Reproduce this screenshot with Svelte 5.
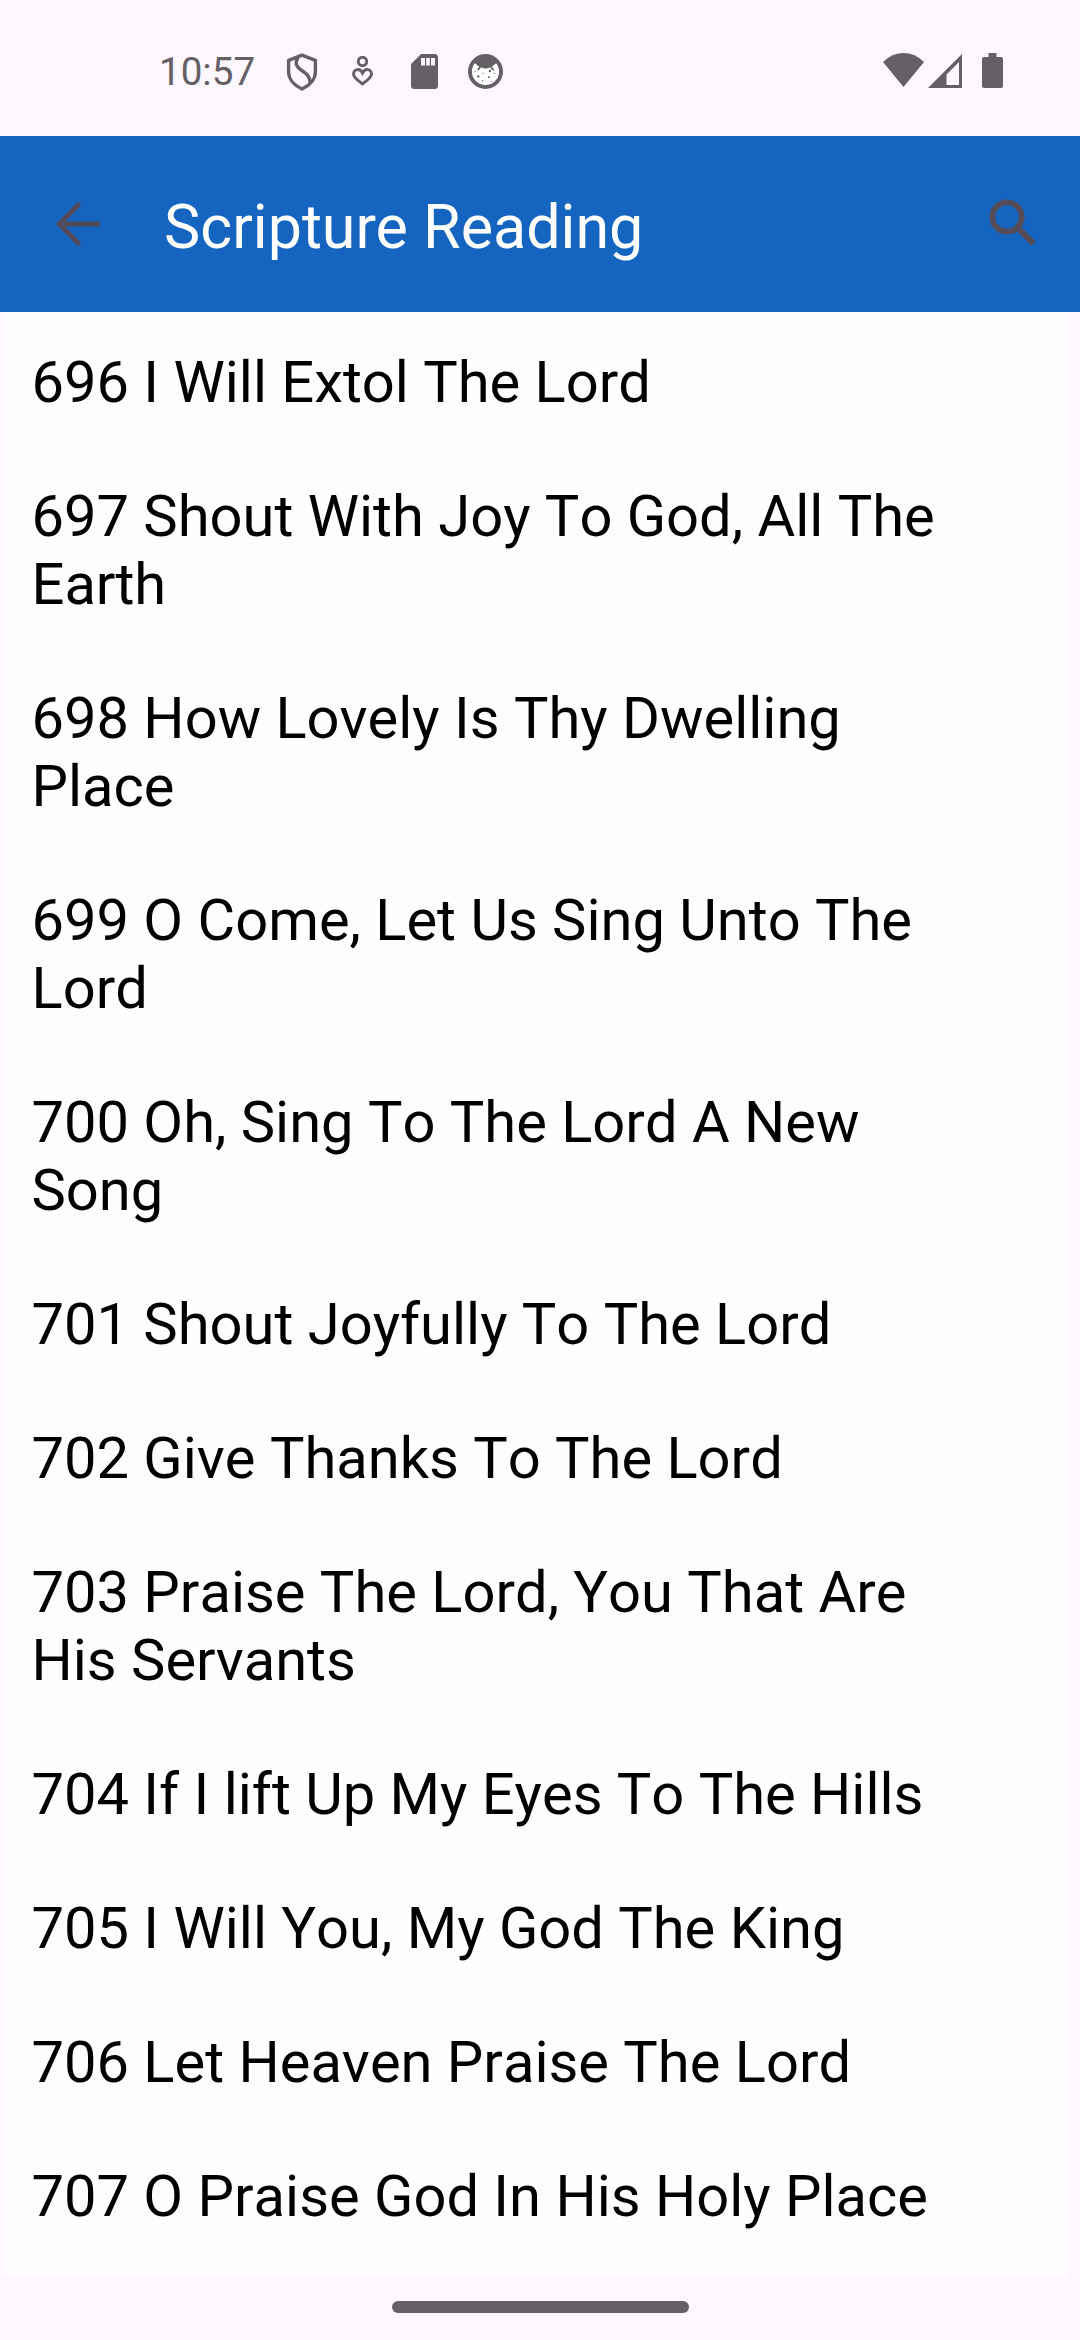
<svelte:options runes={true} />
<script lang="ts">
  const readings = [
    { number: 696, title: 'I Will Extol The Lord' },
    { number: 697, title: 'Shout With Joy To God, All The Earth' },
    { number: 698, title: 'How Lovely Is Thy Dwelling Place' },
    { number: 699, title: 'O Come, Let Us Sing Unto The Lord' },
    { number: 700, title: 'Oh, Sing To The Lord A New Song' },
    { number: 701, title: 'Shout Joyfully To The Lord' },
    { number: 702, title: 'Give Thanks To The Lord' },
    { number: 703, title: 'Praise The Lord, You That Are His Servants' },
    { number: 704, title: 'If I lift Up My Eyes To The Hills' },
    { number: 705, title: 'I Will You, My God The King' },
    { number: 706, title: 'Let Heaven Praise The Lord' },
    { number: 707, title: 'O Praise God In His Holy Place' },
  ];
</script>

<div class="screen">
  <div class="status">
    <span class="time">10:57</span>
    <svg class="shield" width="32" height="38" viewBox="0 0 32 38" fill="none" stroke="#655f66" stroke-width="3.4" stroke-linejoin="round">
      <path d="M16 2.2 2.6 7.4v11.4C2.6 26 8 32.5 16 36c8-3.5 13.4-10 13.4-17.2V7.4z" />
      <path d="M12 4.5C8.5 10 10 14 16.5 18c5.5 3.5 8 6.5 7.5 12" />
    </svg>
    <svg class="wellbeing" width="22" height="30" viewBox="0 0 22 30" fill="none" stroke="#655f66" stroke-width="2.9">
      <circle cx="10.5" cy="5.5" r="4.2" />
      <path d="M10.5 17C9 14 7.5 13.5 6 13.5c-2.600 0-4.500 2-4.500 4.400 0 3.300 3.500 5.500 9 10.100 5.500-4.600 9-6.800 9-10.100 0-2.400-1.900-4.400-4.500-4.400-1.500 0-3 .5-4.500 3.500z" />
    </svg>
    <svg class="card" width="27" height="35" viewBox="0 0 27 35">
      <path fill="#655f66" fill-rule="evenodd" d="M10 0h13.5Q27 0 27 3.5v28Q27 35 23.5 35h-20Q0 35 0 31.5V10zM10 4v7.500h4V4zM15.200 4v7.500h3.600V4zM20 4v7.500h4V4z" />
    </svg>
    <svg class="face" width="35" height="35" viewBox="0 0 36 36">
      <circle cx="18" cy="18" r="16" fill="#fff" stroke="#655f66" stroke-width="4" />
      <path fill="#655f66" d="M6.500 9Q10 1.500 18 1.500T29.500 9L24.500 13l2.500 3-1 1.500-3.500-4q-2 1.500-4.500 1.500t-4.500-1.500l-3 4-1-1.500 2-3z" />
      <g fill="#655f66">
        <circle cx="10.500" cy="23" r="1.200" />
        <circle cx="22.500" cy="17.500" r="1.200" />
        <circle cx="21.500" cy="24" r="1" />
        <circle cx="27" cy="20" r=".6" />
        <circle cx="15" cy="27.500" r=".7" />
        <circle cx="7.500" cy="18" r=".6" />
        <circle cx="15.500" cy="20" r=".6" />
        <circle cx="24" cy="28" r=".6" />
      </g>
    </svg>
    <svg class="wifi" width="41" height="34" viewBox="0 0 41 34">
      <path fill="#655f66" d="M0 9Q9 0 20.500 0T41 9L20.500 34z" />
    </svg>
    <svg class="signal" width="34" height="34" viewBox="0 0 34 34">
      <path fill="#655f66" fill-rule="evenodd" d="M34 0v34H0zM31 8 18.500 20.500V31H31z" />
    </svg>
    <svg class="battery" width="21" height="35" viewBox="0 0 21 35">
      <path fill="#655f66" d="M6.500 0h8v4H19q2 0 2 2v27q0 2-2 2H2q-2 0-2-2V6q0-2 2-2h4.500z" />
    </svg>
  </div>

  <header class="toolbar">
    <svg class="back" width="44" height="44" viewBox="0 0 44 44" fill="none" stroke="#504a5a" stroke-width="5.2">
      <path d="M23.400 1.700 3.400 22l20 20.300M3.400 22H44" />
    </svg>
    <h1>Scripture Reading</h1>
    <svg class="search" width="48" height="48" viewBox="0 0 48 48" fill="none" stroke="#544c58">
      <circle cx="18" cy="18" r="14.700" stroke-width="5.800" />
      <path d="M29 29 44.500 44.500" stroke-width="6.200" />
    </svg>
  </header>

  <ul class="list">
    {#each readings as reading}
      <li>{reading.number} {reading.title}</li>
    {/each}
  </ul>

  <div class="nav"><span class="handle"></span></div>
</div>

<style>
  :global(body) { background: #fef7ff; }
  .screen {
    display: flex;
    flex-direction: column;
    width: 1080px;
    height: 2340px;
    overflow: hidden;
    background: #fef7ff;
    font-family: Roboto, sans-serif;
  }
  svg { display: block; flex: none; }
  .status { display: flex; align-items: flex-start; height: 136px; box-sizing: border-box; padding: 53px 77px 0 159px; }
  .time { width: 127px; margin-top: -4px; font-size: 38.6px; line-height: 45px; color: #655f66; }
  .wellbeing { margin: 3px 0 0 34px; }
  .card { margin: 1px 0 0 37px; }
  .face { margin: 1px 0 0 30px; }
  .wifi { margin-left: auto; }
  .signal { margin: 1px 0 0 4px; }
  .battery { margin-left: 20px; }
  .toolbar { display: flex; align-items: flex-start; height: 176px; box-sizing: border-box; padding: 63px 43px 0 56px; background: #1565c0; }
  .back { margin-top: 3px; }
  h1 { margin: -7px 0 0 64px; font-size: 61px; line-height: 70px; font-weight: 400; color: #fff; }
  .search { margin-left: auto; }
  .list { flex: none; height: 1964px; box-sizing: border-box; margin: 0 12px 0 3px; padding: 3px 0 0; list-style: none; background: #fffdff; }
  li { width: 920px; padding: 33px 0 33px 28.5px; font-size: 57.85px; line-height: 68px; font-kerning: none; color: #000; }
  .nav { display: flex; justify-content: center; padding-top: 25px; }
  .handle { width: 297px; height: 12px; border-radius: 6px; background: #655f66; }
</style>
